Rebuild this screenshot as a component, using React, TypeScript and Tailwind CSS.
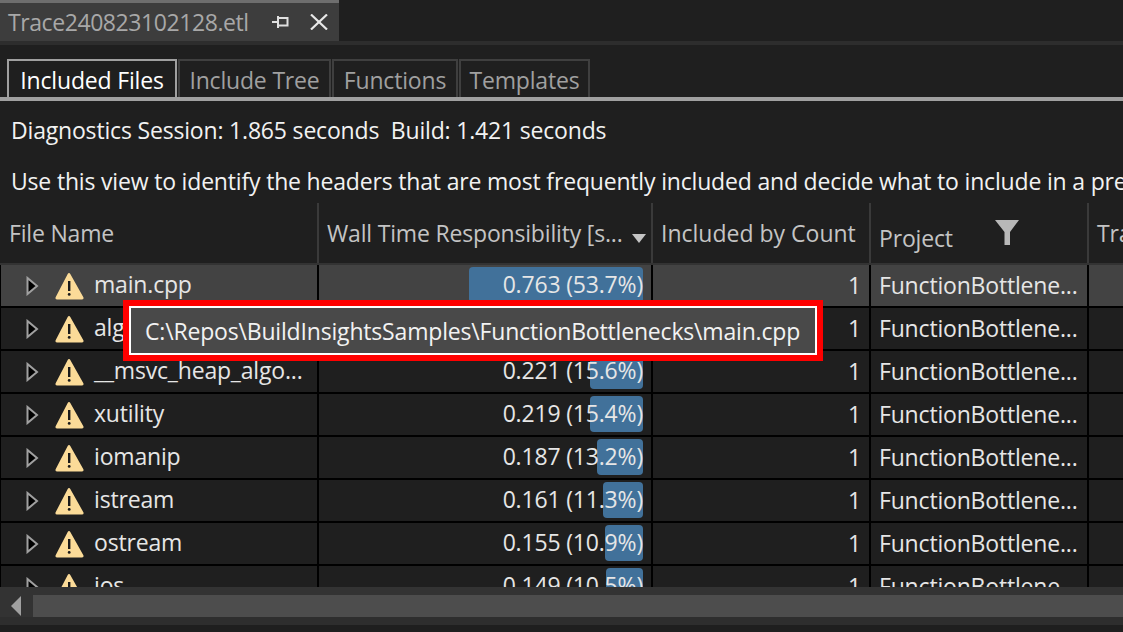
import React from "react";

const rows = [
  { name: "main.cpp", time: "0.763 (53.7%)", bar: 174 },
  { name: "algorithm", time: "0.300 (21.1%)", bar: 68 },
  { name: "__msvc_heap_algo...", time: "0.221 (15.6%)", bar: 53 },
  { name: "xutility", time: "0.219 (15.4%)", bar: 53 },
  { name: "iomanip", time: "0.187 (13.2%)", bar: 46 },
  { name: "istream", time: "0.161 (11.3%)", bar: 40 },
  { name: "ostream", time: "0.155 (10.9%)", bar: 38 },
  { name: "ios", time: "0.149 (10.5%)", bar: 37 },
];

const tabs = [
  { label: "Included Files", width: "w-[170px]" },
  { label: "Include Tree", width: "w-[153px]" },
  { label: "Functions", width: "w-[126px]" },
  { label: "Templates", width: "w-[131px]" },
];

const Chevron = () => (
  <svg width="13" height="20" viewBox="0 0 13 20" className="shrink-0">
    <path d="M1.5 2 L11 10 L1.5 18 Z" fill="#000" stroke="#a0a0a0" strokeWidth="2" />
  </svg>
);

const Warning = () => (
  <svg width="30" height="28" viewBox="0 0 30 28" className="shrink-0">
    <path d="M15 1 Q15.8 1 16.3 2 L29.5 25.5 Q30 27.5 28 27.5 L3 27.5 Q1 27.5 1.5 25.5 L13.7 2 Q14.2 1 15 1 Z" fill="#fbdb98" />
    <rect x="14" y="9" width="2.4" height="10" fill="#1a1a1a" />
    <rect x="13.8" y="21" width="2.8" height="2.8" rx="1.4" fill="#1a1a1a" />
  </svg>
);

const Row = ({ name, time, bar, selected }: { name: string; time: string; bar: number; selected: boolean }) => {
  const bg = selected ? "bg-[#434343]" : "bg-[#1f1f1f]";
  return (
    <div className="flex h-[41px] shrink-0 gap-[2px] pl-[1px] text-[#e6e6e6]">
      <div className={`flex w-[316px] items-center ${bg}`}>
        <div className="ml-[25px] mr-[15px]">
          <Chevron />
        </div>
        <Warning />
        <span className="mb-[2px] ml-[10px]">{name}</span>
      </div>
      <div className={`relative flex w-[332px] items-center justify-end pr-[8px] ${bg}`}>
        <div className="absolute right-[8px] top-[2px] h-[36px] rounded-[4px] bg-[#41719a]" style={{ width: bar }} />
        <span className="relative mb-[2px]">{time}</span>
      </div>
      <div className={`flex w-[216px] items-center justify-end pr-[8px] ${bg}`}>
        <span>1</span>
      </div>
      <div className={`flex w-[216px] items-center pl-[8px] ${bg}`}>
        <span>FunctionBottlene...</span>
      </div>
      <div className={`flex-1 ${bg}`} />
    </div>
  );
};

export default function App() {
  return (
    <div
      className="relative flex h-[632px] w-[1123px] flex-col overflow-hidden bg-[#1f1f1f] text-[23px] tracking-[-0.18px]"
      style={{ fontFamily: '"Open Sans", sans-serif' }}
    >
      {/* document tab */}
      <div className="flex h-[41px] shrink-0">
        <div className="flex w-[339px] items-center border-t-[3px] border-[#6e6e6e] bg-[#3d3d3d] pl-[8px]">
          <span className="tracking-[-0.42px] text-[#a8a8a8]">Trace240823102128.etl</span>
          <svg width="17" height="14" viewBox="0 0 17 14" className="ml-auto">
            <path d="M0 7 H6 M6 1 V13" stroke="#e0e0e0" strokeWidth="2" fill="none" />
            <path d="M7 3 H15.5 V10.5 H7" stroke="#e0e0e0" strokeWidth="2" fill="none" />
          </svg>
          <svg width="18" height="16" viewBox="0 0 18 16" className="ml-[21px] mr-[11px]">
            <path d="M1 0.5 L17 15.5 M17 0.5 L1 15.5" stroke="#e8e8e8" strokeWidth="2.2" fill="none" />
          </svg>
        </div>
      </div>
      <div className="h-[4px] shrink-0 bg-[#2d2d2d]" />

      {/* view tabs */}
      <div className="mt-[14px] flex h-[38px] shrink-0 gap-[1px] pl-[7px]">
        {tabs.map((t, i) => (
          <div
            key={t.label}
            className={`flex items-center justify-center border-2 border-b-0 pt-[2px] ${t.width} ${
              i === 0 ? "border-[#a0a0a0] text-white" : "border-[#3f3f3f] text-[#a0a0a0]"
            }`}
          >
            {t.label}
          </div>
        ))}
      </div>
      <div className="h-[4px] shrink-0 bg-[#a0a0a0]" />

      <div className="mt-[14px] h-[30px] shrink-0 whitespace-pre pl-[11px] leading-[30px] text-[#f2f2f2]">
        Diagnostics Session: 1.865 seconds  Build: 1.421 seconds
      </div>
      <div className="mt-[21px] h-[30px] shrink-0 whitespace-nowrap pl-[11px] leading-[30px] text-[#f2f2f2]">
        Use this view to identify the headers that are most frequently included and decide what to include in a precompiled header.
      </div>

      {/* table header */}
      <div className="mt-[7px] flex h-[60px] shrink-0 pl-[1px] text-[#c4c4c4]">
        <div className="flex w-[318px] items-center border-r-2 border-[#3a3a3a] pl-[8px]">File Name</div>
        <div className="flex w-[334px] items-center border-r-2 border-[#3a3a3a] pl-[8px]">
          <span>Wall Time Responsibility [s...</span>
          <svg width="14" height="9" viewBox="0 0 14 9" className="ml-auto mr-[5px] mt-[11px]">
            <path d="M0 0 H14 L7 9 Z" fill="#c4c4c4" />
          </svg>
        </div>
        <div className="flex w-[218px] items-center border-r-2 border-[#3a3a3a] pl-[8px]">
          <span className="tracking-[0px]">Included by Count</span>
        </div>
        <div className="flex w-[218px] items-center border-r-2 border-[#3a3a3a] pl-[8px]">
          <span className="mt-[11px]">Project</span>
          <svg width="24" height="25" viewBox="0 0 24 25" className="ml-auto mr-[68px] mt-[-2px]">
            <path d="M0 0 H24 L15 12 V25 H9.5 V12 Z" fill="#b8b8b8" />
          </svg>
        </div>
        <div className="flex flex-1 items-center overflow-hidden pl-[8px]">Tra</div>
      </div>
      <div className="h-[2px] shrink-0 bg-[#333333]" />

      {/* rows */}
      <div className="flex min-h-0 flex-1 flex-col gap-[2px] overflow-hidden bg-black">
        {rows.map((r, i) => (
          <Row key={r.name} name={r.name} time={r.time} bar={r.bar} selected={i === 0} />
        ))}
      </div>

      {/* horizontal scrollbar */}
      <div className="flex h-[38px] shrink-0 flex-col bg-[#333333]">
        <div className="mt-[8px] flex h-[22px] items-center">
          <svg width="10" height="20" viewBox="0 0 10 20" className="ml-[11px]">
            <path d="M10 0 V20 L0 10 Z" fill="#a0a0a0" />
          </svg>
          <div className="ml-[12px] h-[22px] flex-1 bg-[#4d4d4d]" />
        </div>
        <div className="h-[8px] bg-[#2e2e2e]" />
      </div>
      <div className="h-[7px] shrink-0 bg-[#1f1f1f]" />

      {/* tooltip with highlight */}
      <div className="absolute left-[123px] top-[300px] flex h-[61px] w-[700px] border-[6px] border-[#ff0000]">
        <div className="flex flex-1 items-center border-2 border-white bg-[#494949] pl-[14px] pt-[2px] text-[#f2f2f2]">
          C:\Repos\BuildInsightsSamples\FunctionBottlenecks\main.cpp
        </div>
      </div>
    </div>
  );
}
